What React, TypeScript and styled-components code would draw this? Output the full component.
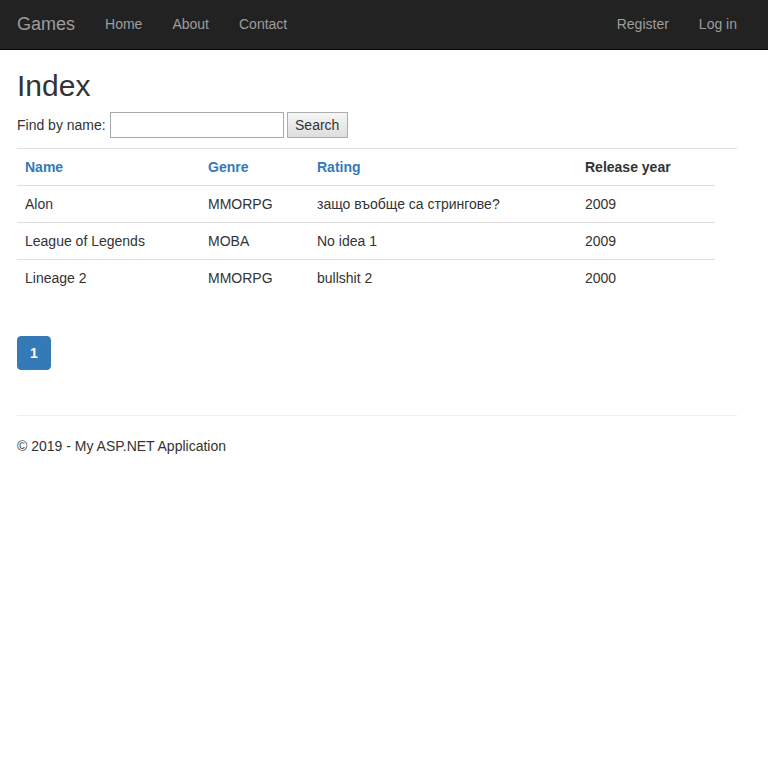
import React from "react";
import styled, { createGlobalStyle } from "styled-components";

const Global = createGlobalStyle`
  * { box-sizing: border-box; }
  html, body { margin: 0; padding: 0; background: #fff; }
  body {
    font-family: "Liberation Sans", Arial, sans-serif;
    font-size: 14px;
    line-height: 20px;
    color: #333;
  }
`;

const Navbar = styled.nav`
  height: 50px;
  background: #222;
  border-bottom: 1px solid #080808;
`;

const NavInner = styled.div`
  width: 720px;
  margin-left: 17px;
  height: 49px;
  display: flex;
  align-items: center;
`;

const Brand = styled.a`
  font-size: 18px;
  line-height: 20px;
  color: #9d9d9d;
  padding: 14px 15px 15px 0;
  text-decoration: none;
`;

const NavList = styled.div<{ $right?: boolean }>`
  display: flex;
  margin-left: ${(p) => (p.$right ? "auto" : "0")};
  margin-right: ${(p) => (p.$right ? "-15px" : "0")};
`;

const NavLink = styled.a`
  color: #9d9d9d;
  font-size: 14px;
  line-height: 20px;
  padding: 14px 15px 15px;
  text-decoration: none;
`;

const Container = styled.main`
  width: 720px;
  margin-left: 17px;
`;

const Title = styled.h2`
  font-size: 30px;
  font-weight: 500;
  line-height: 33px;
  margin: 19px 0 10px;
  color: #333;
`;

const SearchForm = styled.form`
  display: flex;
  align-items: center;
  height: 26px;
  margin: 0 0 10px;
`;

const Label = styled.span`
  margin-right: 4px;
`;

const TextInput = styled.input`
  width: 174px;
  height: 26px;
  border: 1px solid #a9a9a9;
  padding: 2px 4px;
  font-family: inherit;
  font-size: 14px;
`;

const Button = styled.button`
  margin-left: 3px;
  width: 61px;
  height: 26px;
  border: 1px solid #adadad;
  background: linear-gradient(#f6f6f6, #dedede);
  font-family: inherit;
  font-size: 14px;
  color: #333;
  padding: 0;
`;

const TopRule = styled.div`
  border-top: 1px solid #ddd;
`;

const Table = styled.table`
  width: 698px;
  border-collapse: collapse;
  margin-bottom: 20px;
`;

const Th = styled.th<{ $w: number }>`
  width: ${(p) => p.$w}px;
  text-align: left;
  padding: 8px;
  font-weight: bold;
  color: #333;
`;

const SortLink = styled.a`
  color: #337ab7;
  text-decoration: none;
`;

const Td = styled.td`
  padding: 8px;
  border-top: 1px solid #ddd;
`;

const Pager = styled.ul`
  list-style: none;
  display: flex;
  padding: 0;
  margin: 40px 0 45px;
`;

const PageItem = styled.li`
  background: #337ab7;
  border: 1px solid #337ab7;
  color: #fff;
  border-radius: 4px;
  padding: 6px 12px;
  line-height: 20px;
  font-weight: bold;
`;

const Rule = styled.hr`
  border: 0;
  border-top: 1px solid #eee;
  margin: 20px 0;
`;

const Footer = styled.footer`
  p {
    margin: 0 0 10px;
  }
`;

const rows = [
  ["Alon", "MMORPG", "защо въобще са стрингове?", "2009"],
  ["League of Legends", "MOBA", "No idea 1", "2009"],
  ["Lineage 2", "MMORPG", "bullshit 2", "2000"],
];

export default function App() {
  return (
    <>
      <Global />
      <Navbar>
        <NavInner>
          <Brand href="#">Games</Brand>
          <NavList>
            <NavLink href="#">Home</NavLink>
            <NavLink href="#">About</NavLink>
            <NavLink href="#">Contact</NavLink>
          </NavList>
          <NavList $right>
            <NavLink href="#">Register</NavLink>
            <NavLink href="#">Log in</NavLink>
          </NavList>
        </NavInner>
      </Navbar>
      <Container>
        <Title>Index</Title>
        <SearchForm onSubmit={(e) => e.preventDefault()}>
          <Label>Find by name:</Label>
          <TextInput type="text" />
          <Button type="submit">Search</Button>
        </SearchForm>
        <TopRule />
        <Table>
          <thead>
            <tr>
              <Th $w={183}><SortLink href="#">Name</SortLink></Th>
              <Th $w={109}><SortLink href="#">Genre</SortLink></Th>
              <Th $w={268}><SortLink href="#">Rating</SortLink></Th>
              <Th $w={138}>Release year</Th>
            </tr>
          </thead>
          <tbody>
            {rows.map((r) => (
              <tr key={r[0]}>
                {r.map((c, i) => (
                  <Td key={i}>{c}</Td>
                ))}
              </tr>
            ))}
          </tbody>
        </Table>
        <Pager>
          <PageItem>1</PageItem>
        </Pager>
        <Rule />
        <Footer>
          <p>© 2019 - My ASP.NET Application</p>
        </Footer>
      </Container>
    </>
  );
}
